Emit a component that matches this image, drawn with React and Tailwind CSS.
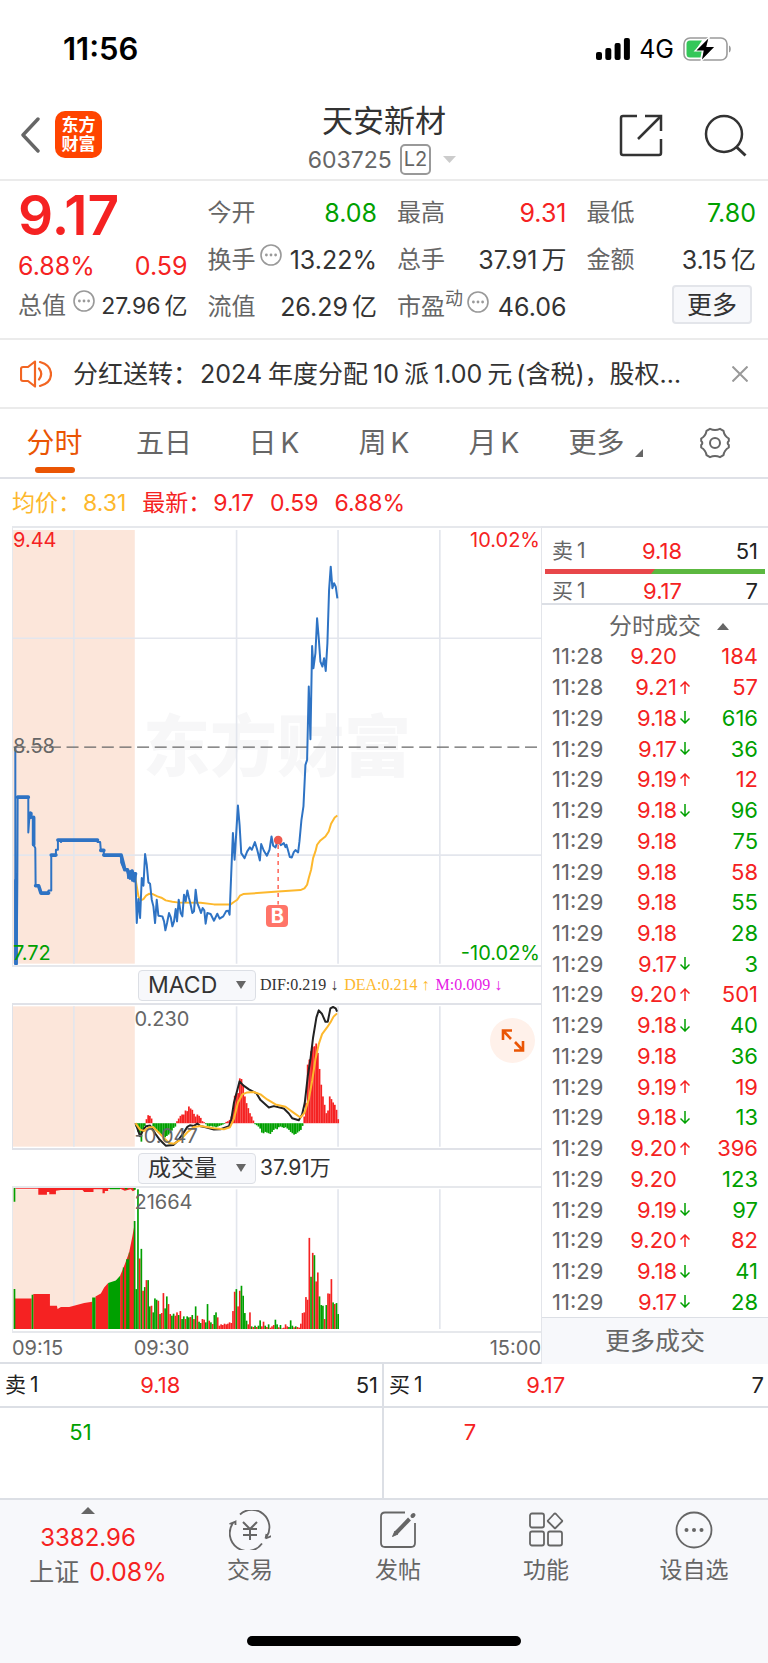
import React, { useState } from "react";

const TABS = [
  { name: "分时" },
  { name: "五日" },
  { name: "日", unit: "K" },
  { name: "周", unit: "K" },
  { name: "月", unit: "K" },
];

const TRADES = [
  ["11:28", "9.20", "", 184, "up"],
  ["11:28", "9.21", "↑", 57, "up"],
  ["11:29", "9.18", "↓", 616, "down"],
  ["11:29", "9.17", "↓", 36, "down"],
  ["11:29", "9.19", "↑", 12, "up"],
  ["11:29", "9.18", "↓", 96, "down"],
  ["11:29", "9.18", "", 75, "down"],
  ["11:29", "9.18", "", 58, "up"],
  ["11:29", "9.18", "", 55, "down"],
  ["11:29", "9.18", "", 28, "down"],
  ["11:29", "9.17", "↓", 3, "down"],
  ["11:29", "9.20", "↑", 501, "up"],
  ["11:29", "9.18", "↓", 40, "down"],
  ["11:29", "9.18", "", 36, "down"],
  ["11:29", "9.19", "↑", 19, "up"],
  ["11:29", "9.18", "↓", 13, "down"],
  ["11:29", "9.20", "↑", 396, "up"],
  ["11:29", "9.20", "", 123, "down"],
  ["11:29", "9.19", "↓", 97, "down"],
  ["11:29", "9.20", "↑", 82, "up"],
  ["11:29", "9.18", "↓", 41, "down"],
  ["11:29", "9.17", "↓", 28, "down"],
];

const RED = "#f52222";
const GREEN = "#00a000";
const GRID = "#e3e6ed";

// call auction, 09:15 - 09:30
const AUCTION =
  "43,682 43,1332 47,1332 49,1082 50,832 82,832 82,938 86,880 92,880 92,893 98,893 98,975 103,985 104,1098 113,1098 120,1120 140,1120 143,1112 151,1112 151,1006 165,1006 165,990 171,990 171,961 180,961 180,967 184,961 290,961 290,967 298,967 300,992 309,992 309,1006 361,1006 361,1028 366,1040 372,1050 380,1050 382,1075 388,1054 394,1083 400,1060 404,1070";

// continuous trading, 09:30 - 11:30
const PRICE =
  "404,1070 408,1210 413,1138 418,1195 423,1075 428,1098 433,1003 438,1035 443,1088 448,1092 453,1140 458,1160 463,1210 468,1140 473,1188 485,1190 490,1205 494,1232 499,1210 505,1180 510,1192 515,1220 520,1205 525,1168 529,1205 534,1140 540,1180 545,1190 550,1125 555,1145 560,1112 565,1135 570,1155 575,1180 580,1175 585,1110 590,1150 596,1165 601,1180 606,1165 611,1172 615,1212 620,1180 630,1183 640,1203 650,1182 657,1197 668,1190 677,1174 683,1173 687,1185 692,1060 697,940 702,1020 707,940 712,857 717,915 722,1000 732,1015 740,995 748,983 754,990 763,967 770,990 778,1022 782,973 790,993 799,1008 807,990 813,950 818,978 825,983 833,960 841,976 850,970 855,982 858,975 863,993 868,1012 874,1013 880,997 885,991 893,998 897,965 903,900 909,860 915,735 920,720 925,500 930,658 935,378 939,445 945,400 950,295 955,355 960,425 966,440 971,415 976,453 981,370 986,210 991,140 996,205 1001,190 1006,200 1011,235";

const AVERAGE =
  "403,1070 408,1100 413,1130 420,1142 428,1138 436,1128 446,1122 456,1123 470,1130 482,1134 495,1142 515,1146 530,1148 600,1149 640,1154 690,1154 700,1147 710,1140 718,1128 728,1123 770,1120 833,1115 900,1111 912,1106 920,1095 925,1075 932,1050 938,1015 945,995 950,975 960,962 975,950 985,935 992,912 1003,893 1011,887";

const MACD = [
  -10, -25, -40, -55, -25, -8, 12, 24, 22, 14, -10, -18, -24, -28, -32, -36, -40, -42, -38, -34,
  -30, -22, -14, -10, 6, 14, 22, 26, 26, 38, 36, 50, 44, 40, 28, 20, 26, 22, 16, 6,
  3, -3, -8, -10, -8, -10, -10, -12, -10, -8, -6, -4, -2, 4, 6, 10, 20, 40, 82, 88,
  90, 134, 132, 115, 80, 60, 45, 30, 20, 8, -3, -6, -10, -16, -28, -30, -26, -28, -30, -32,
  -26, -20, -16, -18, -12, -10, -12, -14, -12, -16, -20, -26, -30, -34, -32, -28, -24, -20, -8, 20,
  60, 175, 190, 215, 228, 230, 238, 210, 162, 115, 80, 55, 30, 38, 80, 72, 62, 55, 40, 12,
];

const DIF =
  "404,491 418,530 428,510 436,500 448,498 455,508 465,524 475,538 487,550 495,558 518,556 530,545 545,525 560,502 568,497 580,499 590,492 600,500 615,503 640,510 660,509 685,500 692,480 700,430 708,400 717,366 728,378 745,390 768,402 780,422 805,444 820,440 850,447 865,462 875,476 895,482 905,465 913,430 922,350 930,300 938,235 948,175 955,154 965,165 975,188 982,188 990,148 998,144 1006,148 1010,158";

const DEA =
  "404,491 418,510 430,514 445,503 458,503 470,515 490,535 505,550 520,552 540,540 560,518 580,502 600,499 640,506 670,509 688,503 700,478 712,430 725,405 740,399 760,398 780,405 800,420 825,435 855,442 880,460 900,474 912,460 925,420 935,365 945,300 955,255 965,225 980,205 990,190 1000,172 1010,163";

// one bar a minute, negative = price fell
const VOLUME = [
  -120, -420, 212, -241, 115, -126, 147, -147, -68, 70, -50, -92, -88, 85, -45, 48, 108, -62, -98, 75,
  45, -40, -46, 40, 50, -42, 54, -30, -38, 30, -38, -35, 36, -42, 30, -68, 40, -22, -18, 30,
  28, -20, -75, 25, -20, 15, -42, -50, 35, 10, 14, 12, 16, 14, 16, 20, 18, 54, 112, -120,
  68, 115, -130, -100, -48, -25, 14, 50, -8, 6, -10, 6, -10, -26, 8, 22, -10, 6, -14, 4,
  8, 12, -28, -14, 5, -12, 2, 4, 14, 8, -6, -26, -10, 5, -8, 6, 4, 16, 48, 50,
  96, 88, 274, -157, 229, -222, 143, 170, -98, -72, -70, 30, -72, 107, 106, 150, -80, 75, -78, -45,
];

const color = (dir) => (dir === "up" ? "text-[#f52222]" : "text-[#00a000]");

const Triangle = ({ className, down }) => (
  <svg viewBox="0 0 10 6" className={className} preserveAspectRatio="none" fill="currentColor">
    <path d={down ? "M0 0H10L5 6Z" : "M0 6H10L5 0Z"} />
  </svg>
);

const InfoDots = () => (
  <svg viewBox="0 0 22 22" className="w-[22px] h-[22px] shrink-0 -mt-[10px] text-[#999]" fill="none" stroke="currentColor">
    <circle cx="11" cy="11" r="10" strokeWidth="1.6" />
    <g fill="currentColor" stroke="none">
      <circle cx="6.4" cy="11" r="1.4" />
      <circle cx="11" cy="11" r="1.4" />
      <circle cx="15.6" cy="11" r="1.4" />
    </g>
  </svg>
);

const StatusBar = () => (
  <div className="h-[90px] pt-2 pl-[63px] pr-[35px] flex items-center justify-between text-black">
    <span className="text-[31px] leading-8 font-semibold">11:56</span>
    <div className="flex items-center gap-[9px]">
      <svg viewBox="0 0 34 22" className="w-[34px] h-[22px]">
        <rect x="0" y="14" width="6" height="8" rx="2" />
        <rect x="9.3" y="10" width="6" height="12" rx="2" />
        <rect x="18.6" y="5" width="6" height="17" rx="2" />
        <rect x="27.9" y="0" width="6" height="22" rx="2" />
      </svg>
      <span className="text-[25px] leading-8">4G</span>
      <svg viewBox="0 0 50 26" className="w-[50px] h-[26px]">
        <rect x="1" y="2" width="43" height="22" rx="6" fill="none" stroke="#9b9b9b" strokeWidth="1.6" />
        <path d="M46 9.5c2.4 .8 2.4 6.2 0 7Z" fill="#9b9b9b" />
        <path d="M7 4.5H19L13 13.5H19L17.5 21.5H7Q3.5 21.5 3.5 18V8Q3.5 4.5 7 4.5Z" fill="#34c759" />
        <path d="M26.5 0.5L12 15H20L18 25.5L32.5 10.5H24Z" stroke="#fff" strokeWidth="1.2" />
      </svg>
    </div>
  </div>
);

const Header = () => (
  <header className="h-[91px] border-b-2 border-[#ebebeb] pl-5 pr-5 flex items-center justify-between">
    <div className="flex-1 flex items-center gap-[15px]">
      <button aria-label="返回" className="text-[#666]">
        <svg viewBox="0 0 20 36" className="w-5 h-9" fill="none" stroke="currentColor" strokeWidth="3.4" strokeLinecap="round" strokeLinejoin="round">
          <path d="M18 2L3 18L18 34" />
        </svg>
      </button>
      <div className="w-[47px] h-[47px] rounded-[10px] bg-[#ff4400] text-white text-[17px] leading-[19px] font-bold flex flex-col items-center justify-center">
        <span>东方</span>
        <span>财富</span>
      </div>
    </div>
    <div className="pt-2 flex flex-col items-center">
      <h1 className="text-[31px] leading-[42px] text-[#333]">天安新材</h1>
      <button className="flex items-center text-[23px] leading-9 text-[#666]">
        603725
        <span className="ml-2 px-[2px] border-2 border-[#999] rounded-[5px] text-[20px] leading-[27px]">L2</span>
        <Triangle down className="ml-3 mr-1 w-[13px] h-[7px] text-[#ccc]" />
      </button>
    </div>
    <div className="flex-1 flex justify-end gap-[41px] text-[#333]">
      <button aria-label="分享">
        <svg viewBox="0 0 44 44" className="w-11 h-11" fill="none" stroke="currentColor" strokeWidth="2.5" strokeLinejoin="round">
          <path d="M18 3H4Q2 3 2 5V40Q2 42 4 42H40Q42 42 42 40V26" />
          <path d="M26 3H42V18" strokeLinejoin="miter" />
          <path d="M42 3L19 26" />
        </svg>
      </button>
      <button aria-label="搜索">
        <svg viewBox="0 0 44 44" className="w-11 h-11" fill="none" stroke="currentColor" strokeWidth="2.5">
          <circle cx="20" cy="21" r="18" />
          <path d="M32.5 34L41.5 42.5" strokeWidth="3" />
        </svg>
      </button>
    </div>
  </header>
);

const Stat = ({ label, value, unit, sup, info, tone = "text-[#333]" }) => (
  <div className="h-[47px] flex items-center justify-between whitespace-nowrap">
    <span className="flex items-center text-[24px] text-[#666]">
      {label}
      {sup && <span className="text-[18px] -mt-4">{sup}</span>}
      {info && <span className="ml-1 flex"><InfoDots /></span>}
    </span>
    <span className={tone}>
      {value}
      {unit && <span className="ml-1">{unit}</span>}
    </span>
  </div>
);

const Quote = () => (
  <section className="grid grid-cols-4 gap-x-5 pt-2 pb-2 pl-[18px] pr-3 border-b-2 border-[#ebebeb] text-[25px] leading-8">
    <div>
      <div className="h-[52px] flex items-center text-[55px] leading-[52px] font-semibold text-[#f52222]">9.17</div>
      <div className="h-[49px] flex items-center justify-between text-[#f52222]">
        <span>6.88%</span>
        <span>0.59</span>
      </div>
      <div className="h-8 flex items-center justify-between whitespace-nowrap">
        <span className="text-[24px] text-[#666]">总值</span>
        <InfoDots />
        <span className="text-[23px] text-[#333]">27.96<span className="ml-1">亿</span></span>
      </div>
    </div>
    <div>
      <Stat label="今开" value="8.08" tone="text-[#00a000]" />
      <Stat label="换手" value="13.22%" info />
      <Stat label="流值" value="26.29" unit="亿" />
    </div>
    <div>
      <Stat label="最高" value="9.31" tone="text-[#f52222]" />
      <Stat label="总手" value="37.91" unit="万" />
      <Stat label="市盈" sup="动" value="46.06" info />
    </div>
    <div>
      <Stat label="最低" value="7.80" tone="text-[#00a000]" />
      <Stat label="金额" value="3.15" unit="亿" />
      <div className="h-[43px] flex items-center justify-end pr-1">
        <button className="w-20 h-[39px] rounded bg-[#f7f8fb] border-2 border-[#e3e5ea] text-[25px] text-[#333]">更多</button>
      </div>
    </div>
  </section>
);

const Notice = () => (
  <div className="h-[69px] border-b-2 border-[#ebebeb] pl-5 pr-5 flex items-center">
    <svg viewBox="0 0 32 28" className="w-8 h-7 shrink-0 text-[#f26522]" fill="none" stroke="currentColor" strokeWidth="2.2" strokeLinejoin="round">
      <path d="M15 1.5L8 7H3Q1 7 1 9V19Q1 21 3 21H8L15 26.5Z" />
      <path d="M19 8.5Q23.5 14 19 19.5M20 2Q31 5 31 14T20 26" strokeLinecap="round" />
    </svg>
    <a href="#notice" className="ml-[21px] flex-1 text-[25px] leading-8 text-[#333] whitespace-nowrap">
      分红送转：<span className="ml-[2px] mr-[6px]">2024</span>年度分配<span className="mx-[5px]">10</span>派<span className="mx-[5px]">1.00</span>元
      <span className="ml-1">(含税)，股权…</span>
    </a>
    <button aria-label="关闭" className="text-[#999]">
      <svg viewBox="0 0 16 16" className="w-4 h-4" fill="none" stroke="currentColor" strokeWidth="2">
        <path d="M0.5 0.5L15.5 15.5M15.5 0.5L0.5 15.5" />
      </svg>
    </button>
  </div>
);

const ChartTabs = ({ active, onChange }) => (
  <nav className="h-[70px] border-b-2 border-[#dfe1e7] grid grid-cols-[109fr_110fr_110fr_110fr_110fr_113fr_106fr] items-start text-[28px] leading-8 text-[#666]">
    {TABS.map(({ name, unit }) => (
      <button
        key={name}
        onClick={() => onChange(name)}
        className={`flex flex-col items-center pt-[18px] ${active === name ? "text-[#ea5504]" : ""}`}
      >
        <span className="flex gap-1">
          {name}
          {unit && <span>{unit}</span>}
        </span>
        {active === name && <span className="mt-2 w-10 h-[6px] rounded-[3px] bg-[#ea5504]" />}
      </button>
    ))}
    <button className="flex items-end justify-center pt-[18px]">
      更多
      <svg viewBox="0 0 8 8" className="ml-[10px] mb-[2px] w-2 h-2" fill="currentColor">
        <path d="M8 0V8H0Z" />
      </svg>
    </button>
    <button aria-label="设置" className="flex justify-center pt-[18px]">
      <svg viewBox="0 0 32 32" className="w-8 h-8" fill="none" stroke="currentColor" strokeWidth="2" strokeLinejoin="round">
        <path d="M11 1.8Q16 4 21 1.8L24.5 3.8Q25.3 9 29.8 11.5V14Q27.5 16 29.8 18V20.5Q25.3 23 24.5 28.2L21 30.2Q16 28 11 30.2L7.5 28.2Q6.7 23 2.2 20.5V18Q4.5 16 2.2 14V11.5Q6.7 9 7.5 3.8Z" />
        <circle cx="16" cy="16" r="5" />
      </svg>
    </button>
  </nav>
);

const GridLines = ({ top, bottom }) => (
  <>
    <rect x="36" y={top} width="366" height={bottom - top} fill="#fce6da" />
    {[219, 708, 1013, 1319].map((x) => (
      <path key={x} d={`M${x} ${top}V${bottom}`} stroke={GRID} strokeWidth="5" />
    ))}
  </>
);

const PriceChart = () => (
  <div className="relative h-[441px] border-y-2 border-l border-[#e6e8ec] text-[20px] leading-6">
    <div className="absolute inset-0 pl-[130px] flex items-center whitespace-nowrap text-[67px] font-black text-[#f7f7f8]">东方财富</div>
    <svg viewBox="36 24 1587 1312" preserveAspectRatio="none" className="relative w-full h-full" fill="none">
      <GridLines top={30} bottom={1332} />
      <path d="M36 355H1623M36 1006H1623" stroke={GRID} strokeWidth="5" />
      <path d="M38 682H1623" stroke="#666" strokeWidth="4" strokeDasharray="36 17" />
      <polyline points={AVERAGE} stroke="#fdb82d" strokeWidth="6" strokeLinejoin="round" />
      <polyline points={AUCTION} stroke="#2e73c4" strokeWidth="6" strokeLinejoin="round" />
      <path d="M45 1082V1332M50 832H82M88 880V893M98 893V975M104 1098H113L120 1120H143M151 1006H165M171 961H290M300 992H309M309 1006H361L372 1050H380L388 1075L394 1054L400 1083L404 1062" stroke="#2e73c4" strokeWidth="11" strokeLinejoin="round" strokeLinecap="round" />
      <polyline points={PRICE} stroke="#2e73c4" strokeWidth="6" strokeLinejoin="round" />
      <circle cx="833" cy="961" r="13" fill="#ee5a50" />
      <path d="M833 976V1154" stroke="#ff7468" strokeWidth="5" strokeDasharray="12 12" />
    </svg>
    <span className="absolute left-0 top-0 text-[#f52222]">9.44</span>
    <span className="absolute left-0 top-[206px] text-[#666]">8.58</span>
    <span className="absolute left-0 bottom-0 text-[#00a000]">7.72</span>
    <span className="absolute right-px top-0 text-[#f52222]">10.02%</span>
    <span className="absolute right-px bottom-0 text-[#00a000]">-10.02%</span>
    <span className="absolute left-[48%] top-[377px] w-[22px] h-[22px] rounded bg-[#ff7468] text-white text-[20px] leading-[22px] font-bold text-center">B</span>
  </div>
);

const IndicatorSelect = ({ label, options, children }) => (
  <div className="flex items-center pl-[126px] h-9">
    <div className="relative">
      <select
        aria-label={label}
        className="appearance-none block w-[118px] h-[31px] pl-[9px] rounded bg-[#f7f8fb] border border-[#dcdfe5] text-[23px] leading-7 text-[#333]"
      >
        {options.map((o) => (
          <option key={o}>{o}</option>
        ))}
      </select>
      <Triangle down className="absolute right-[10px] top-[11px] w-[10px] h-2 text-[#666] pointer-events-none" />
    </div>
    {children}
  </div>
);

const MacdChart = () => (
  <div className="relative h-[147px] border-y-2 border-l border-[#e0e2e8] text-[20px] leading-6">
    <svg viewBox="36 138 1587 427" preserveAspectRatio="none" className="w-full h-full" fill="none">
      <GridLines top={142} bottom={561} />
      {MACD.map((v, i) => (
        <rect key={i} x={404 + i * 5.1} y={v > 0 ? 491 - v : 491} width="5.2" height={Math.abs(v)} fill={v > 0 ? RED : GREEN} />
      ))}
      <polyline points={DIF} stroke="#222" strokeWidth="6" strokeLinejoin="round" />
      <polyline points={DEA} stroke="#fdb82d" strokeWidth="6" strokeLinejoin="round" />
    </svg>
    <span className="absolute left-[23%] top-[2px] text-[#666]">0.230</span>
    <span className="absolute left-[23%] bottom-0 text-[#666]">-0.047</span>
    <button aria-label="全屏" className="absolute right-[6px] top-[13px] w-[45px] h-[45px] rounded-full bg-[#fff1ea] text-[#ea5504]">
      <svg viewBox="0 0 45 45" className="w-full h-full" fill="none" stroke="currentColor" strokeWidth="2.6">
        <path d="M13 22V12.5H22M13 12.5L21 21M33 23V32.5H24M33 32.5L25 24" />
      </svg>
    </button>
  </div>
);

const VolumeChart = () => (
  <div className="relative h-[147px] border-y-2 border-l border-[#e6e8ec] text-[20px] leading-6">
    <svg viewBox="36 686 1587 430" preserveAspectRatio="none" className="w-full h-full">
      <GridLines top={690} bottom={1110} />
      {/* matched volume during the auction */}
      <path fill={RED} d="M42 1110V1018H92V1110ZM97 1110V1005H147V1040H168L170 1050L180 1044H205L250 1032L274 1028V1110ZM284 1110V1012L300 1003L310 985L322 972V1110ZM358 1110V950L372 915L385 880L395 830L403 785V1110Z" />
      <path fill={GREEN} d="M38 1110V990H43V1110ZM92 1110V1007H97V1110ZM274 1110V1015H284V1110ZM322 1110V972L345 964L358 950V1110ZM366 1110V925H370V1110ZM376 1110V900H384V880H386V1110ZM399 1110V785H404V1110Z" />
      {/* unmatched volume hangs from the top */}
      <path fill={RED} d="M43 686H403V692L396 696L390 690L372 694L360 689H322V695H312V702H305V690H278V698H250L245 692H180L165 694V705H145V698H138V706H112V688H43Z" />
      <path fill={GREEN} d="M38 686H43V727H38ZM327 686H358V690H327ZM372 686H380V690H372ZM398 686H405V691H398Z" />
      {VOLUME.map((v, i) => (
        <rect key={i} x={404 + i * 5.1} y={1110 - Math.abs(v)} width="5" height={Math.abs(v)} fill={v > 0 ? RED : GREEN} />
      ))}
    </svg>
    <span className="absolute left-[23%] top-[2px] text-[#666]">21664</span>
  </div>
);

const Level = ({ side, price, volume }) => (
  <div className="flex items-center pl-[10px] pr-[10px]">
    <span className="w-[62px] flex gap-1 text-[21px] text-[#666]">{side}<span>1</span></span>
    <span className="w-[68px] text-right text-[#f52222]">{price}</span>
    <span className="flex-1 text-right text-[#222]">{volume}</span>
  </div>
);

const TradePanel = () => (
  <aside className="border-l border-t-2 border-[#e3e5ea] flex flex-col text-[22px] leading-6">
    <div className="pt-[11px]"><Level side="卖" price="9.18" volume="51" /></div>
    <div className="mt-[6px] mx-[3px] h-[5px] flex bg-[#5cb840]">
      <svg viewBox="0 0 110 5" className="h-full w-1/2" preserveAspectRatio="none">
        <path d="M0 0H110L106 5H0Z" fill="#e8474a" />
      </svg>
    </div>
    <div className="pt-[5px] border-b-2 border-[#dcdfe5]"><Level side="买" price="9.17" volume="7" /></div>
    <button className="pt-[7px] pb-px pl-7 flex items-center justify-center gap-4 text-[23px] leading-[28px] text-[#666]">
      分时成交
      <Triangle className="w-3 h-[7px]" />
    </button>
    <div className="flex-1 flex flex-col">
      {TRADES.map(([time, price, arrow, volume, dir], i) => (
        <div key={i} className="flex-1 flex items-center px-[10px]">
          <span className="w-[58px] text-[#666]">{time}</span>
          <span className="w-[67px] text-right text-[#f52222]">{price}</span>
          <span className="w-4 flex justify-center">
            {arrow && (
              <svg viewBox="0 0 10 13" className={`w-[10px] h-[13px] ${color(arrow === "↑" ? "up" : "down")}`} fill="none" stroke="currentColor" strokeWidth="1.5">
                <path d={arrow === "↑" ? "M5 13V1M0.5 5.5L5 1L9.5 5.5" : "M5 0V12M0.5 7.5L5 12L9.5 7.5"} />
              </svg>
            )}
          </span>
          <span className={`flex-1 text-right ${color(dir)}`}>{volume}</span>
        </div>
      ))}
    </div>
    <button className="h-[47px] bg-[#f7f8fb] border-t border-[#dcdfe5] text-[25px] text-[#666]">更多成交</button>
  </aside>
);

const OrderSide = ({ side, price, volume, queue, tone }) => (
  <div className="text-[22px] leading-6">
    <div className="h-11 pl-[5px] pr-1 flex items-center justify-between border-b-2 border-[#dcdfe5]">
      <span className="w-[47%] flex justify-between text-[#222]">
        <span className="flex gap-1 text-[21px]">{side}<span>1</span></span>
        <span className="text-[#f52222]">{price}</span>
      </span>
      <span className="text-[#222]">{volume}</span>
    </div>
    <div className={`h-[90px] pt-3 w-[24%] text-right ${tone}`}>{queue}</div>
  </div>
);

const ICONS = {
  trade: (
    <>
      <path d="M11 4.5A17.5 17.5 0 0 1 37.5 27M33 33.5A17.5 17.5 0 0 1 4 13M0.5 14L6.5 11.5M36.5 28.5L42.5 26M4 13L6.5 11.5V15M37.5 24L36.5 28.5" />
      <path d="M14 12L21 19L28 12M21 19V30M14 19H28M14 25H28" strokeWidth="2" />
    </>
  ),
  post: (
    <>
      <path d="M28 2.5H8Q4 2.5 4 6.5V33Q4 37 8 37H34Q38 37 38 33V13" />
      <path d="M18.5 23.5L32.5 9" strokeWidth="4" />
      <path d="M15.5 26.5L18 21L21 24Z" fill="currentColor" strokeWidth="1" />
      <path d="M35.5 6L36.5 5" strokeWidth="4" strokeLinecap="round" />
    </>
  ),
  more: (
    <>
      <rect x="5" y="3.5" width="14" height="14" rx="2" />
      <rect x="5" y="21.5" width="14" height="14" rx="2" />
      <rect x="23" y="21.5" width="14" height="14" rx="2" />
      <path d="M29 4L23 10.5Q22.5 11 23 11.5L29.5 18Q30 18.5 30.5 18L37 11.5Q37.5 11 37 10.5L31 4Q30 3 29 4Z" />
    </>
  ),
  fav: (
    <>
      <circle cx="21" cy="20" r="17.5" />
      <g fill="currentColor" stroke="none">
        <circle cx="13.5" cy="20" r="2" />
        <circle cx="21" cy="20" r="2" />
        <circle cx="28.5" cy="20" r="2" />
      </g>
    </>
  ),
};

const NavItem = ({ icon, label }) => (
  <button className="flex flex-col items-center pt-[10px] text-[23px] leading-8 text-[#666]">
    <svg viewBox="0 0 42 40" className="w-[42px] h-10 mb-1" fill="none" stroke="currentColor" strokeWidth="1.8">
      {ICONS[icon]}
    </svg>
    {label}
  </button>
);

const BottomNav = () => (
  <footer className="bg-[#f7f8fb]">
    <div className="grid grid-cols-[176fr_148fr_148fr_148fr_148fr] items-start">
      <button className="flex flex-col items-center pt-[7px] pl-5 text-[25px] leading-8 text-[#f52222]">
        <Triangle className="mr-5 w-[14px] h-[7px] text-[#666]" />
        <span className="mt-2 mr-5 text-[24px]">3382.96</span>
        <span className="mt-[2px] flex gap-[10px]"><span className="text-[#666]">上证</span>0.08%</span>
      </button>
      <NavItem icon="trade" label="交易" />
      <NavItem icon="post" label="发帖" />
      <NavItem icon="more" label="功能" />
      <NavItem icon="fav" label="设自选" />
    </div>
    <div className="pt-12 pb-[17px]">
      <div className="mx-auto w-[274px] h-[10px] rounded-full bg-black" />
    </div>
  </footer>
);

const App = () => {
  const [tab, setTab] = useState("分时");

  return (
    <div className="w-full bg-white font-['Inter','Noto_Sans_CJK_SC',sans-serif] overflow-hidden">
      <StatusBar />
      <Header />
      <Quote />
      <Notice />
      <ChartTabs active={tab} onChange={setTab} />

      <div className="h-[47px] pt-px pl-3 flex items-center gap-4 text-[23px] leading-8 text-[#f52222]">
        <span className="text-[#fdb82d]">均价：<span className="ml-[2px]">8.31</span></span>
        <span>最新：<span className="ml-[2px]">9.17</span></span>
        <span>0.59</span>
        <span>6.88%</span>
      </div>

      <div className="grid grid-cols-[541fr_227fr]">
        <div className="pl-3 border-b-2 border-[#dcdfe5]">
          <PriceChart />
          <IndicatorSelect label="指标" options={["MACD", "KDJ", "RSI"]}>
            <div className="ml-1 flex gap-[6px] whitespace-nowrap font-['Liberation_Serif',serif] text-[16px] leading-5">
              <span className="text-[#333]">DIF:0.219 ↓</span>
              <span className="text-[#fdb82d]">DEA:0.214 ↑</span>
              <span className="text-[#e619e6]">M:0.009 ↓</span>
            </div>
          </IndicatorSelect>
          <MacdChart />
          <IndicatorSelect label="副图" options={["成交量", "量比"]}>
            <span className="ml-1 text-[21px] leading-6 text-[#333]">37.91万</span>
          </IndicatorSelect>
          <VolumeChart />
          <div className="h-[29px] flex items-center text-[20px] leading-6 text-[#666]">
            <span className="w-[23%]">09:15</span>
            <span>09:30</span>
            <span className="ml-auto">15:00</span>
          </div>
        </div>
        <TradePanel />
      </div>

      <div className="grid grid-cols-2 divide-x-2 divide-[#dcdfe5] border-b-2 border-[#dcdfe5]">
        <OrderSide side="卖" price="9.18" volume="51" queue="51" tone="text-[#00a000]" />
        <OrderSide side="买" price="9.17" volume="7" queue="7" tone="text-[#f52222]" />
      </div>

      <BottomNav />
    </div>
  );
};

export default App;
